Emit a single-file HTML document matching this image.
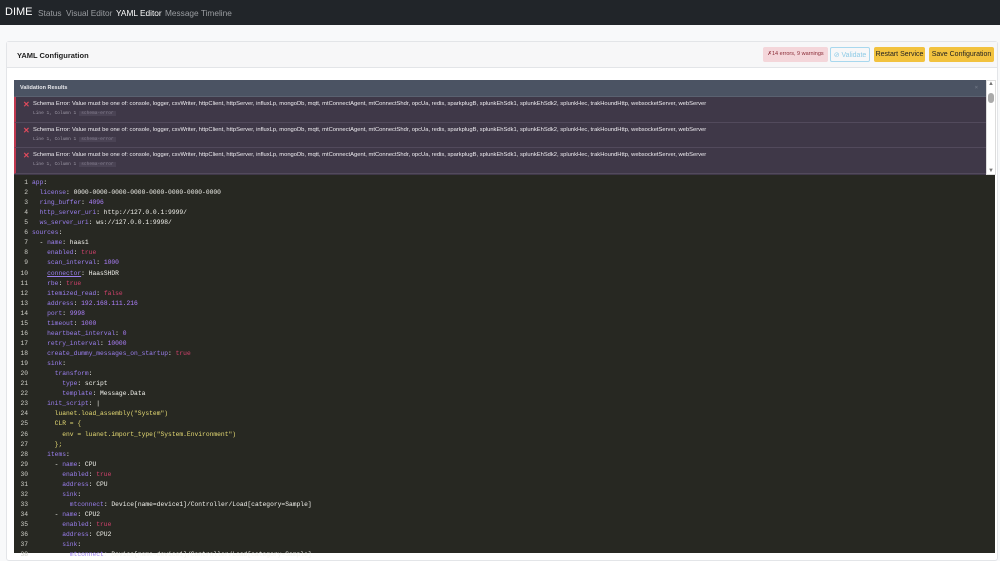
<!DOCTYPE html>
<html><head><meta charset="utf-8"><style>
*{box-sizing:border-box;margin:0;padding:0}
body{width:1000px;height:553px;overflow:hidden;background:#f8f9fa;font-family:"Liberation Sans",sans-serif;position:relative}
.nav{position:absolute;left:0;top:0;width:1000px;height:25px;background:#212529;color:#9a9da1;font-size:8.3px}
.nav .b{position:absolute;left:5px;top:6px;color:#fff;font-size:11px}
.nav span{position:absolute;top:7.5px}
.card{position:absolute;left:6px;top:41px;width:992px;height:520px;background:#fff;border:1px solid #e3e5e8;border-radius:3px}
.hdr{position:absolute;left:0;top:0;width:990px;height:26px;background:#f7f7f8;border-bottom:1px solid #e3e5e8}
.hdr .t{position:absolute;left:10px;top:9px;font-size:7.5px;font-weight:bold;color:#222}
.btn{position:absolute;top:5px;height:15px;font-size:7px;line-height:15px;text-align:center;border-radius:2px;white-space:nowrap}
.vr{position:absolute;left:14px;top:80px;width:972px;height:95px;background:#3f3848}
.vh{height:17px;background:#4b5363;color:#e6e6ea;font-size:5.5px;font-weight:bold;line-height:17px;padding-left:6px;border-bottom:1px solid #5a6170}
.it{height:25.5px;border-left:2px solid #c0394f;border-bottom:1px solid #524a5c;position:relative}
.it .x{position:absolute;left:7px;top:3px;color:#e04a5c;font-size:8px;font-weight:bold}
.it .m{position:absolute;left:17px;top:4px;color:#f0eef2;font-size:5.8px;white-space:nowrap}
.it .l{position:absolute;left:17px;top:14px;color:#9d98a6;font-size:4.5px;font-family:"Liberation Mono",monospace}
.it .l i{font-style:normal;margin-left:3px;padding:0 2px;background:#4a4354;color:#847e8e}
.sb{position:absolute;left:986px;top:80px;width:10px;height:95px;background:#fff;border:1px solid #ddd}
.code{position:absolute;left:14px;top:175px;width:981px;height:378px;background:#272822;font-family:"Liberation Mono",monospace;font-size:6.3px;color:#f3f3ee}
.ln{position:absolute;left:0;width:14px;text-align:right;color:#cfcfc8}
.cl{position:absolute;left:18px;white-space:pre}
.k{color:#9b7ff0}.n{color:#ae81ff}.r{color:#d1416c}.s{color:#e6db74}
</style></head><body>
<div class="nav"><div class="b">DIME</div><span style="left:38px">Status</span><span style="left:66px">Visual Editor</span><span style="left:116px;color:#fff">YAML Editor</span><span style="left:165px">Message Timeline</span></div>
<div class="card"><div class="hdr"><div class="t">YAML Configuration</div>
<div class="btn" style="left:756px;width:65px;background:#f4d6da;color:#8a2a35;font-size:5.5px">✗14 errors, 9 warnings</div>
<div class="btn" style="left:823px;width:40px;border:1px solid #a8d8ee;color:#8ecbe6">⊘ Validate</div>
<div class="btn" style="left:867px;width:51px;background:#f2c23e;color:#222">Restart Service</div>
<div class="btn" style="left:922px;width:65px;background:#f2c23e;color:#222">Save Configuration</div>
</div></div>
<div class="vr"><div class="vh">Validation Results<span style="float:right;margin-right:8px;color:#6d7483">×</span></div>
<div class="it"><span class="x">✕</span><div class="m">Schema Error: Value must be one of: console, logger, csvWriter, httpClient, httpServer, influxLp, mongoDb, mqtt, mtConnectAgent, mtConnectShdr, opcUa, redis, sparkplugB, splunkEhSdk1, splunkEhSdk2, splunkHec, trakHoundHttp, websocketServer, webServer</div><div class="l">Line 1, Column 1<i>schema-error</i></div></div>
<div class="it"><span class="x">✕</span><div class="m">Schema Error: Value must be one of: console, logger, csvWriter, httpClient, httpServer, influxLp, mongoDb, mqtt, mtConnectAgent, mtConnectShdr, opcUa, redis, sparkplugB, splunkEhSdk1, splunkEhSdk2, splunkHec, trakHoundHttp, websocketServer, webServer</div><div class="l">Line 1, Column 1<i>schema-error</i></div></div>
<div class="it"><span class="x">✕</span><div class="m">Schema Error: Value must be one of: console, logger, csvWriter, httpClient, httpServer, influxLp, mongoDb, mqtt, mtConnectAgent, mtConnectShdr, opcUa, redis, sparkplugB, splunkEhSdk1, splunkEhSdk2, splunkHec, trakHoundHttp, websocketServer, webServer</div><div class="l">Line 1, Column 1<i>schema-error</i></div></div>
</div>
<div class="sb"><div style="position:absolute;left:1px;top:12px;width:6px;height:10px;background:#aaa;border-radius:3px"></div><div style="position:absolute;left:1px;top:0;font-size:6px;color:#777">▲</div><div style="position:absolute;left:1px;bottom:0;font-size:6px;color:#777">▼</div></div>
<div class="code" id="c"></div>
<script>
var L=[
'<span class="k">app</span>:',
'  <span class="k">license</span>: 0000-0000-0000-0000-0000-0000-0000-0000',
'  <span class="k">ring_buffer</span>: <span class="n">4096</span>',
'  <span class="k">http_server_uri</span>: http://127.0.0.1:9999/',
'  <span class="k">ws_server_uri</span>: ws://127.0.0.1:9998/',
'<span class="k">sources</span>:',
'  - <span class="k">name</span>: haas1',
'    <span class="k">enabled</span>: <span class="r">true</span>',
'    <span class="k">scan_interval</span>: <span class="n">1000</span>',
'    <span class="k" style="text-decoration:underline">connector</span>: HaasSHDR',
'    <span class="k">rbe</span>: <span class="r">true</span>',
'    <span class="k">itemized_read</span>: <span class="r">false</span>',
'    <span class="k">address</span>: <span class="n">192.168.111.216</span>',
'    <span class="k">port</span>: <span class="n">9998</span>',
'    <span class="k">timeout</span>: <span class="n">1000</span>',
'    <span class="k">heartbeat_interval</span>: <span class="n">0</span>',
'    <span class="k">retry_interval</span>: <span class="n">10000</span>',
'    <span class="k">create_dummy_messages_on_startup</span>: <span class="r">true</span>',
'    <span class="k">sink</span>:',
'      <span class="k">transform</span>:',
'        <span class="k">type</span>: script',
'        <span class="k">template</span>: Message.Data',
'    <span class="k">init_script</span>: |',
'<span class="s">      luanet.load_assembly("System")</span>',
'<span class="s">      CLR = {</span>',
'<span class="s">        env = luanet.import_type("System.Environment")</span>',
'<span class="s">      };</span>',
'    <span class="k">items</span>:',
'      - <span class="k">name</span>: CPU',
'        <span class="k">enabled</span>: <span class="r">true</span>',
'        <span class="k">address</span>: CPU',
'        <span class="k">sink</span>:',
'          <span class="k">mtconnect</span>: Device[name=device1]/Controller/Load[category=Sample]',
'      - <span class="k">name</span>: CPU2',
'        <span class="k">enabled</span>: <span class="r">true</span>',
'        <span class="k">address</span>: CPU2',
'        <span class="k">sink</span>:',
'          <span class="k">mtconnect</span>: Device[name=device1]/Controller/Load[category=Sample]'];
var h='';for(var i=0;i<L.length;i++){var y=4+i*10.06;h+='<div class="ln" style="top:'+y+'px">'+(i+1)+'</div><div class="cl" style="top:'+y+'px">'+L[i]+'</div>';}
document.getElementById('c').innerHTML=h;
</script>
</body></html>
